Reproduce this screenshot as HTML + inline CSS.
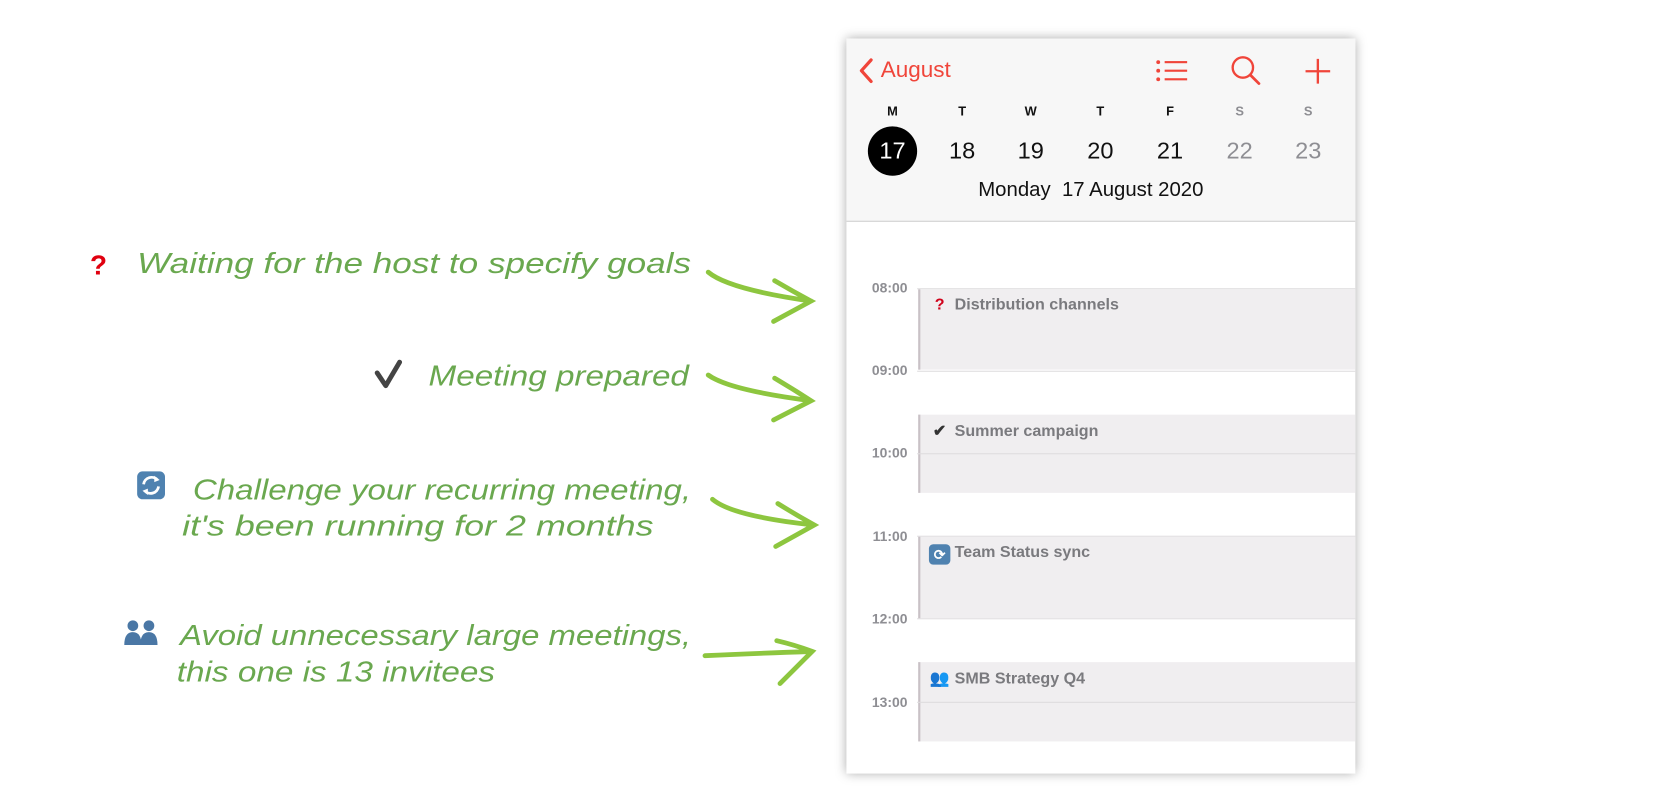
<!DOCTYPE html>
<html><head><meta charset="utf-8"><style>
html,body{margin:0;padding:0;background:#fff;width:1680px;height:800px;overflow:hidden}
#w{position:absolute;left:0;top:0;width:1568px;height:747px;transform:scale(1.07143);transform-origin:0 0;font-family:"Liberation Sans",sans-serif}
.a{position:absolute}
#cal{left:790px;top:36px;width:475px;height:686px;background:#fff;box-shadow:0 0 10px rgba(0,0,0,.35);overflow:hidden}
#hdr{position:absolute;left:0;top:0;width:475px;height:170px;background:#f7f7f7;border-bottom:1px solid #cfcfcf}
.dl{position:absolute;top:61px;width:40px;margin-left:-20px;text-align:center;font-size:12px;font-weight:bold;color:#111}
.dn{position:absolute;top:92px;width:46px;margin-left:-23px;text-align:center;font-size:22px;line-height:26px;color:#111}
.tl{position:absolute;left:0;width:57px;text-align:right;font-size:13px;color:#8e8e93;font-weight:bold}
.hl{position:absolute;left:66px;width:409px;height:1px;background:#dedcde}
.ev{position:absolute;left:67px;width:406px;background:#f0eef0;border-left:2px solid #c9c1c6}
.et{position:absolute;left:8px;top:6px;font-size:15px;font-weight:bold;color:#7a7a7e;white-space:nowrap}
.ic{display:inline-block;width:20px;text-align:center;margin-right:4px}
</style></head><body><div id="w">

<svg class="a" style="left:0;top:0" width="790" height="747" viewBox="0 0 790 747">
<g fill="#6aa84f" font-family="Liberation Sans, sans-serif" font-style="italic" font-size="27">
<text x="128" y="255" textLength="517" lengthAdjust="spacingAndGlyphs">Waiting for the host to specify goals</text>
<text x="400" y="360" textLength="243" lengthAdjust="spacingAndGlyphs">Meeting prepared</text>
<text x="180" y="466" textLength="465" lengthAdjust="spacingAndGlyphs">Challenge your recurring meeting,</text>
<text x="170" y="500" textLength="440" lengthAdjust="spacingAndGlyphs">it's been running for 2 months</text>
<text x="168" y="602" textLength="477" lengthAdjust="spacingAndGlyphs">Avoid unnecessary large meetings,</text>
<text x="165" y="636" textLength="297" lengthAdjust="spacingAndGlyphs">this one is 13 invitees</text>
</g>
<text x="84" y="256" font-size="26" font-weight="bold" fill="#e0000f" font-family="Liberation Sans, sans-serif">?</text>
<path d="M352 348 L360 360 L373 338" stroke="#444" stroke-width="4.5" fill="none" stroke-linecap="round" stroke-linejoin="round"/>
<rect x="128" y="440" width="26" height="26" rx="5" fill="#4f82b0"/>
<path d="M134 452 a7.5 7.5 0 0 1 13 -4 M148 454 a7.5 7.5 0 0 1 -13 4" stroke="#fff" stroke-width="2.6" fill="none"/>
<path d="M144 444 l5 4 l-5 2z M138 462 l-5 -4 l5 -2z" fill="#fff"/>
<g fill="#4a77a5"><circle cx="124" cy="584" r="5"/><circle cx="139" cy="584" r="5"/><path d="M116 602 q0 -12 8 -12 q8 0 8 12z M131 602 q0 -12 8 -12 q8 0 8 12z"/></g>
<g stroke="#8dc63f" stroke-width="4.5" fill="none" stroke-linecap="round">
<path d="M661 254 Q680 270 757 281 M723 262 Q740 272 757 281 L722 300"/>
<path d="M661 350 Q680 364 757 374 M723 353 Q740 363 757 374 L722 392"/>
<path d="M665 466 Q684 482 760 490 M726 470 Q742 480 760 490 L724 510"/>
<path d="M658 612 Q700 610 758 608 M725 598 Q742 602 758 608 L728 638"/>
</g>
</svg>

<div id="cal" class="a">
<div id="hdr">
<svg class="a" style="left:10px;top:17px" width="20" height="26"><path d="M13 3 L4 13 L13 23" stroke="#f0453a" stroke-width="3" fill="none" stroke-linecap="round" stroke-linejoin="round"/></svg>
<div class="a" style="left:32px;top:18px;font-size:21px;color:#f0453a">August</div>
<svg class="a" style="left:288px;top:18px" width="32" height="26"><g fill="#f0453a"><circle cx="3" cy="4" r="1.8"/><circle cx="3" cy="12" r="1.8"/><circle cx="3" cy="20" r="1.8"/><rect x="9" y="3" width="21" height="2"/><rect x="9" y="11" width="21" height="2"/><rect x="9" y="19" width="21" height="2"/></g></svg>
<svg class="a" style="left:358px;top:15px" width="32" height="30"><circle cx="12" cy="12" r="9.5" stroke="#f0453a" stroke-width="2.2" fill="none"/><path d="M19 19 L27 27" stroke="#f0453a" stroke-width="2.6" stroke-linecap="round"/></svg>
<svg class="a" style="left:427px;top:17px" width="28" height="28"><path d="M13 2 V25 M1.5 13.5 H24.5" stroke="#f0453a" stroke-width="2.2"/></svg>
<div class="dl" style="left:43px">M</div><div class="dl" style="left:108px">T</div><div class="dl" style="left:172px">W</div><div class="dl" style="left:237px">T</div><div class="dl" style="left:302px">F</div><div class="dl" style="left:367px;color:#8e8e93">S</div><div class="dl" style="left:431px;color:#8e8e93">S</div>
<div class="a" style="left:20px;top:82px;width:46px;height:46px;border-radius:50%;background:#000"></div>
<div class="dn" style="left:43px;color:#fff">17</div><div class="dn" style="left:108px">18</div><div class="dn" style="left:172px">19</div><div class="dn" style="left:237px">20</div><div class="dn" style="left:302px">21</div><div class="dn" style="left:367px;color:#8e8e93">22</div><div class="dn" style="left:431px;color:#8e8e93">23</div>
<div class="a" style="left:123px;top:131px;font-size:19px;color:#111;white-space:nowrap">Monday&nbsp; 17 August 2020</div>
</div>

<div class="hl" style="top:233px"></div><div class="tl" style="top:225px">08:00</div>
<div class="hl" style="top:310px"></div><div class="tl" style="top:302px">09:00</div>
<div class="tl" style="top:379px">10:00</div>
<div class="hl" style="top:464px"></div><div class="tl" style="top:457px">11:00</div>
<div class="hl" style="top:541px"></div><div class="tl" style="top:534px">12:00</div>
<div class="tl" style="top:612px">13:00</div>

<div class="ev" style="top:234px;height:75px"><div class="et"><span class="ic" style="color:#d0021b">?</span>Distribution channels</div></div>
<div class="ev" style="top:351px;height:73px"><div class="et"><span class="ic" style="color:#333">✔</span>Summer campaign</div></div>
<div class="hl" style="top:387px"></div>
<div class="ev" style="top:465px;height:76px"><div class="et"><span class="ic" style="height:19px;background:#4f82b0;border-radius:4px;vertical-align:-2px;color:#fff;font-size:13px;line-height:19px">⟳</span>Team Status sync</div></div>
<div class="ev" style="top:582px;height:74px"><div class="et"><span class="ic" style="color:#4a77a5">👥</span>SMB Strategy Q4</div></div>
<div class="hl" style="top:619px"></div>
</div>
</div></body></html>
